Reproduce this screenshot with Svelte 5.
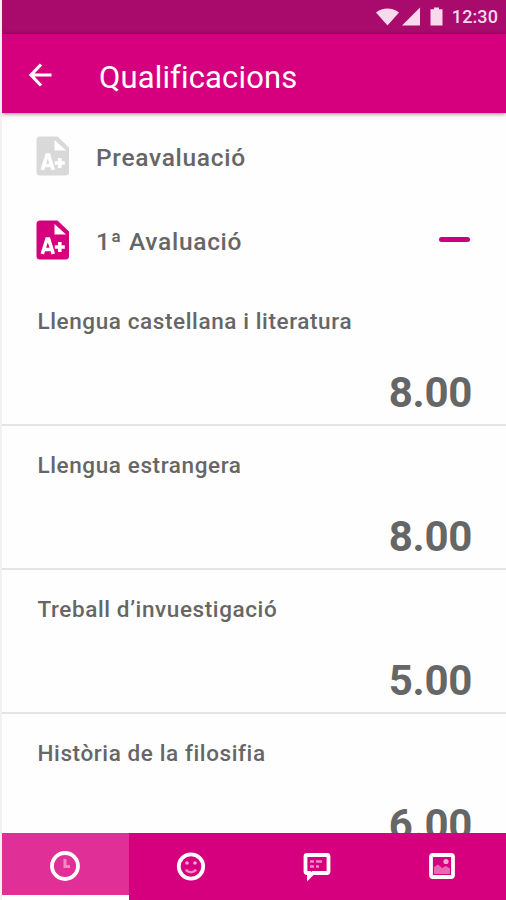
<script>
  let sections = $state([
    { id: 1, name: "Preavaluació", open: false },
    { id: 2, name: "1ª Avaluació", open: true }
  ]);

  const subjects = [
    { name: "Llengua castellana i literatura", grade: "8.00" },
    { name: "Llengua estrangera", grade: "8.00" },
    { name: "Treball d’invuestigació", grade: "5.00" },
    { name: "Història de la filosifia", grade: "6.00" }
  ];

  const tabs = ["clock", "smile", "chat", "picture"];
  let activeTab = $state("clock");

  function toggle(section) {
    section.open = !section.open;
  }
</script>

<div class="screen">
  <div class="statusbar">
    <svg class="signals" width="70" height="20" viewBox="0 0 70 20">
      <path d="M0 5.5C6.5 .2 16.5 .2 23 5.5L11.5 18.5Z" />
      <path d="M44 0.5V18.5H26Z" />
      <path d="M58 .5h5v1.700h3.500v16.300h-12V2.200H58Z" />
    </svg>
    <span class="time">12:30</span>
  </div>

  <header>
    <button class="back" aria-label="Enrere">
      <svg width="24" height="24" viewBox="0 0 24 24">
        <path d="M13 1.5L3 12L13 22.5M3 12H23.500" />
      </svg>
    </button>
    <h1>Qualificacions</h1>
  </header>

  <main>
    {#each sections as section (section.id)}
      <button class="section" class:open={section.open} onclick={() => toggle(section)}>
        <svg width="33" height="40" viewBox="0 0 33 40">
          <path class="sheet" d="M4 .5H21.5L33 11.5V36a3.500 3.500 0 0 1-3.500 3.500H4A3.500 3.500 0 0 1 .5 36V4A3.500 3.500 0 0 1 4 .5Z" />
          <path class="fold" d="M18.500 4V14.500H30Z" />
          <path class="mark" d="M6.300 34L11 19H12.600L17.300 34M8 29.500H15.500" />
          <path class="mark" d="M23.800 22V32M18.800 27H28.800" />
        </svg>
        <span class="title">{section.name}</span>
        {#if section.open}
          <span class="minus"></span>
        {/if}
      </button>
      {#if section.open}
        <ul>
          {#each subjects as subject}
            <li>
              <span class="subject">{subject.name}</span>
              <span class="grade">{subject.grade}</span>
            </li>
          {/each}
        </ul>
      {/if}
    {/each}
  </main>

  <nav>
    {#each tabs as tab}
      <button class="tab" class:active={activeTab === tab} aria-label={tab} onclick={() => (activeTab = tab)}>
        <svg width="32" height="32" viewBox="0 0 32 32">
          {#if tab === "clock"}
            <circle cx="16" cy="16" r="13" />
            <path class="soft" d="M16 9V16.500H21" />
          {:else if tab === "smile"}
            <circle cx="16" cy="16.500" r="12.200" />
            <circle class="dot" cx="12" cy="13" r="1.800" />
            <circle class="dot" cx="20" cy="13" r="1.800" />
            <path class="soft mouth" d="M11 19.500C13 23 19 23 21 19.500" />
          {:else if tab === "chat"}
            <path d="M6 5H26Q27.500 5 27.500 6.500V21.500Q27.500 23 26 23H12L8 27V23H6Q4.500 23 4.500 21.500V6.500Q4.500 5 6 5Z" />
            <path class="soft lines" d="M9 11.500H13M15 11.500H21M9 16.500H13M15 16.500H18" />
          {:else}
            <rect x="5" y="5" width="22" height="22" rx="2" />
            <path class="fill" d="M8 24V17L12 14.500L16 18L20 16L24 18.500V24Z" />
            <circle class="dot" cx="20" cy="11.500" r="2.600" />
          {/if}
        </svg>
      </button>
    {/each}
  </nav>
</div>

<style>
:global(body) {
  margin: 0;
}

.screen {
  width: 506px;
  height: 900px;
  box-sizing: border-box;
  border-left: 2px solid #f3f0f1;
  display: flex;
  flex-direction: column;
  overflow: hidden;
  background-color: #fefefe;
  font-family: Roboto, sans-serif;
  color: #666;
}

button {
  padding: 0;
  border: none;
  background: none;
  font: inherit;
  color: inherit;
  cursor: pointer;
}

.statusbar {
  flex: none;
  height: 34px;
  box-sizing: border-box;
  padding: 0 8px 1px 0;
  display: flex;
  justify-content: flex-end;
  align-items: center;
  gap: 6px;
  background-color: #a80b6c;
  color: #f9d9ec;
}

.signals {
  fill: #f9d9ec;
}

.time {
  font-size: 18px;
  font-weight: 500;
  letter-spacing: 0.1px;
}

header {
  flex: none;
  height: 79px;
  display: flex;
  align-items: center;
  background-color: #d6007e;
  color: #fff;
  box-shadow: 0 1px 4px rgba(0, 0, 0, 0.45);
}

.back {
  display: flex;
  margin: 2px 0 0 26px;
}

.back svg {
  fill: none;
  stroke: #fff;
  stroke-width: 3.2;
}

h1 {
  margin: 7px 0 0 47px;
  font-size: 31px;
  font-weight: 400;
  letter-spacing: 0.15px;
}

main {
  flex: 1;
  min-height: 0;
  overflow: hidden;
}

.section {
  display: flex;
  align-items: center;
  box-sizing: border-box;
  width: 100%;
  height: 84px;
  padding: 1px 36px 0 34px;
  text-align: left;
}

.sheet {
  fill: #d9d9d9;
}

.open .sheet {
  fill: #d6007e;
}

.fold {
  fill: #fff;
}

.mark {
  fill: none;
  stroke: #fff;
  stroke-width: 3.6;
}

.title {
  flex: 1;
  margin-left: 27px;
  padding-top: 3px;
  font-size: 24.5px;
  font-weight: 500;
  letter-spacing: 0.7px;
}

.minus {
  width: 31px;
  height: 5px;
  border-radius: 3px;
  background-color: #cc0077;
}

ul {
  margin: 1px 0 0;
  padding: 0;
  list-style: none;
}

li {
  height: 144px;
  box-sizing: border-box;
  padding: 25px 34px 0 35.5px;
  display: flex;
  flex-direction: column;
  border-bottom: 2px solid #e4e4e4;
}

.subject {
  font-size: 22.5px;
  line-height: 28px;
  font-weight: 500;
  letter-spacing: 0.6px;
}

.grade {
  margin-top: 33px;
  align-self: flex-end;
  font-size: 42px;
  line-height: 50px;
  font-weight: 700;
  letter-spacing: -0.3px;
}

nav {
  flex: none;
  height: 67px;
  display: flex;
  background-color: #d6007e;
}

.tab {
  flex: 1;
  display: flex;
  justify-content: center;
  align-items: center;
  box-sizing: border-box;
  padding: 4px 2px 0 0;
  border-bottom: 5px solid transparent;
}

.tab.active {
  flex: none;
  width: 127px;
  background-color: #e02f97;
  border-bottom-color: #fff;
}

.tab svg {
  fill: none;
  stroke: #fff;
  stroke-width: 3.8;
}

.tab .soft {
  stroke: #f08bc5;
  stroke-width: 3;
}

.tab .mouth,
.tab .lines {
  stroke-width: 2.5;
}

.tab .dot {
  fill: #f3a3d1;
  stroke: none;
}

.tab .fill {
  fill: #e968b3;
  stroke: none;
}
</style>
